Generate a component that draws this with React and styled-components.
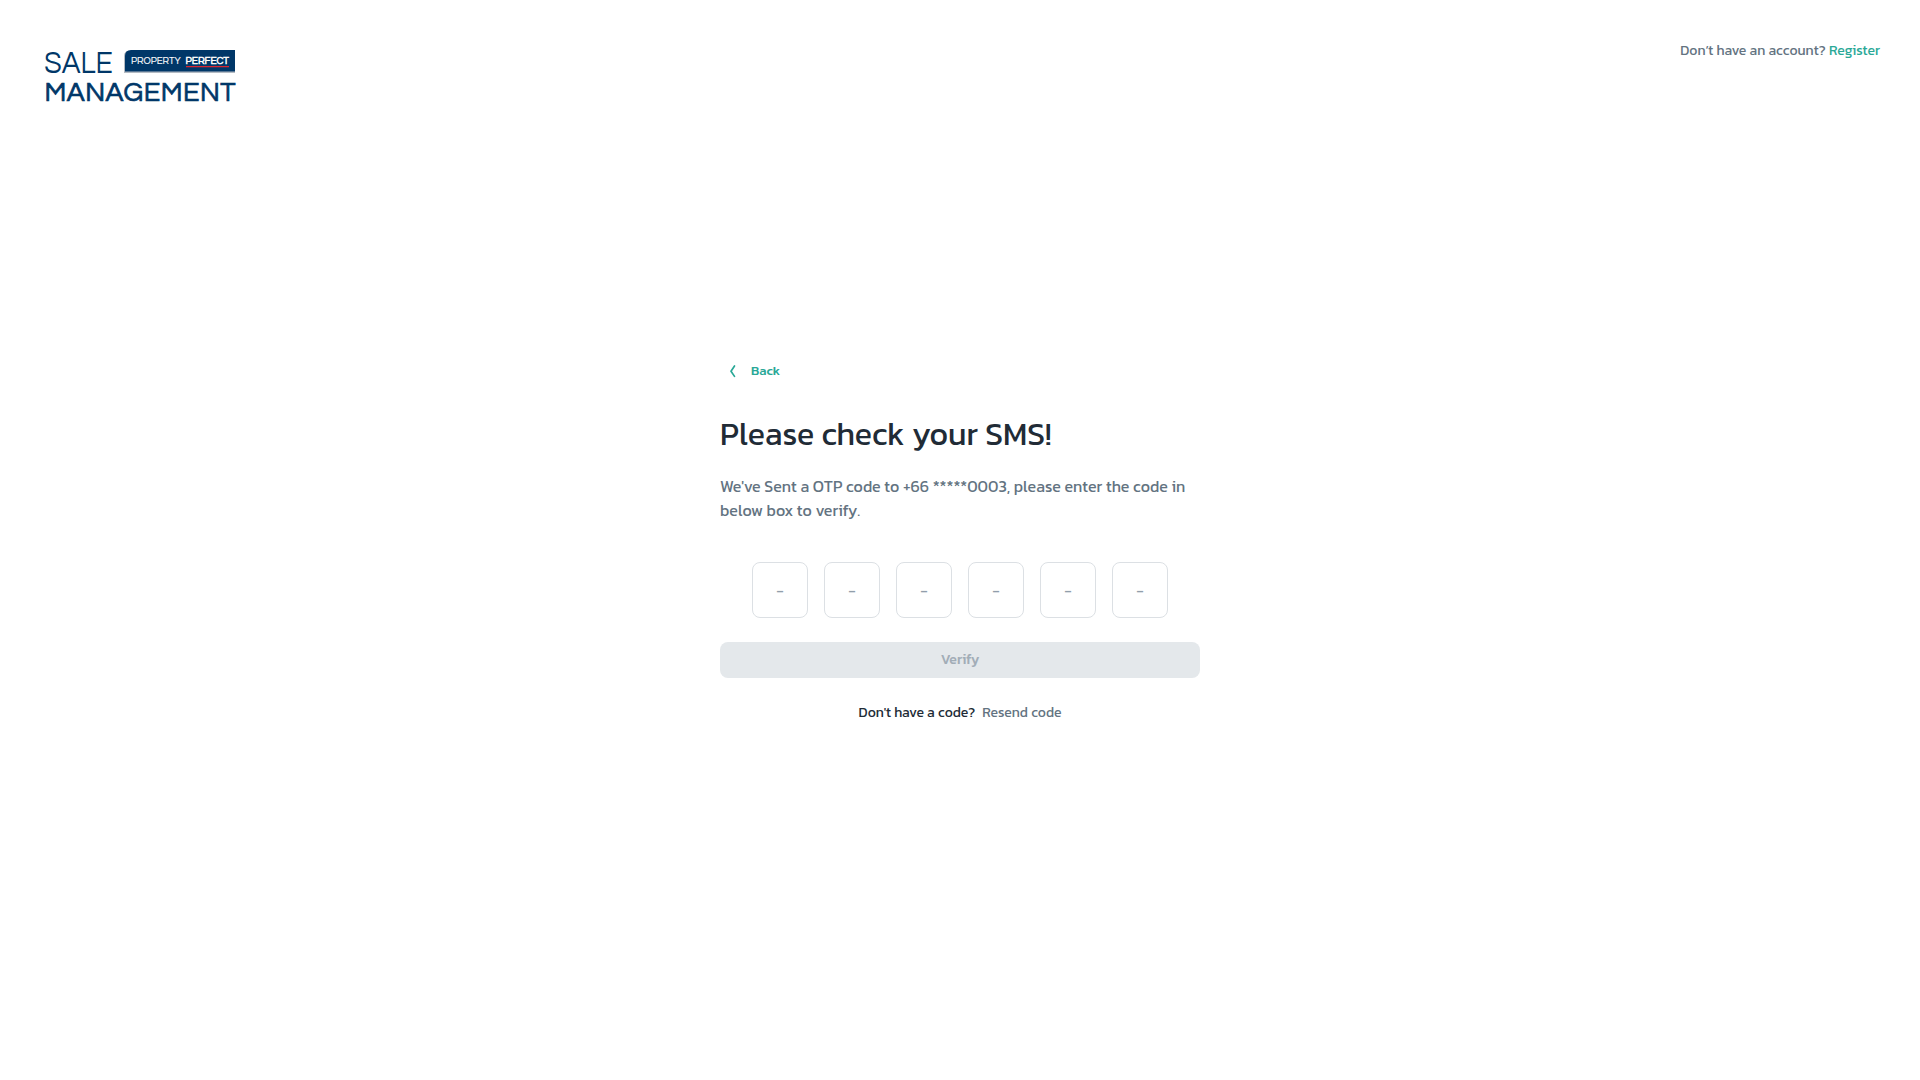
import React from 'react';
import styled, { createGlobalStyle } from 'styled-components';

const GlobalStyle = createGlobalStyle`
  *, *::before, *::after { box-sizing: border-box; }
  body { margin: 0; background: #fff; font-family: Kanit, Roboto, sans-serif; color: #212b36; }
  h1, p { margin: 0; }
`;

const Page = styled.div`
  display: flex;
  flex-direction: column;
  height: 100vh;
  overflow: hidden;
`;

const Header = styled.header`
  display: flex;
  justify-content: space-between;
  align-items: flex-start;
  height: 120px;
  padding: 40px 40px 0;
`;

const Logo = styled.svg`
  display: block;
  width: 200px;
  height: 72px;
  font-family: Questrial, Lato, sans-serif;
`;

const AccountPrompt = styled.p`
  font-size: 14px;
  line-height: 22px;
  color: #637381;
`;

const Link = styled.a`
  color: #2aa897;
  text-decoration: none;
`;

const Main = styled.main`
  display: flex;
  flex-direction: column;
  width: 480px;
  margin: 235px auto 0;
`;

const BackButton = styled.button`
  display: flex;
  align-items: center;
  align-self: flex-start;
  gap: 8px;
  height: 30px;
  padding: 1px 5px 0 3px;
  border: 0;
  background: none;
  color: #2aa897;
  font: 500 13px/22px Kanit, Roboto, sans-serif;
`;

const Title = styled.h1`
  margin-top: 25px;
  font-weight: 400;
  font-size: 32px;
  line-height: 48px;
  white-space: nowrap;
`;

const Description = styled.p`
  margin-top: 16px;
  font-size: 16px;
  line-height: 24px;
  color: #637381;
  white-space: nowrap;
`;

const CodeRow = styled.div`
  display: flex;
  justify-content: center;
  gap: 16px;
  margin-top: 40px;
`;

const CodeInput = styled.input`
  width: 56px;
  height: 56px;
  padding: 0 0 1px;
  border: 1px solid #dce0e4;
  border-radius: 8px;
  background: #fff;
  text-align: center;
  font: 400 16px/23px Kanit, Roboto, sans-serif;
  outline: 0;
  &::placeholder { color: #919eab; opacity: 1; }
`;

const VerifyButton = styled.button`
  height: 36px;
  margin-top: 24px;
  padding: 0;
  border: 0;
  border-radius: 8px;
  background: #e4e8eb;
  color: #a2adb7;
  font: 500 14px/24px Kanit, Roboto, sans-serif;
`;

const Resend = styled.p`
  display: flex;
  justify-content: center;
  gap: 7px;
  margin-top: 24px;
  font-size: 14px;
  line-height: 22px;
`;

const ResendLink = styled.span`
  color: #637381;
`;

const slots = [1, 2, 3, 4, 5, 6];

function BrandLogo() {
  return (
    <Logo viewBox="40 40 200 72" role="img" aria-label="Sale Management Property Perfect">
      <text x="44.300" y="72.500" fontSize="32" fill="#003768" textLength="68.500" lengthAdjust="spacingAndGlyphs">SALE</text>
      <path d="M124 73V56q0-5 5-5H235V73Z" fill="#b4bbc3" />
      <path d="M125 71.500V56q0-6 6-6H235V71.500Z" fill="#003768" />
      <text x="131" y="64.200" fontSize="10" fill="#fff" stroke="#fff" strokeWidth="0.150" textLength="49.500" lengthAdjust="spacingAndGlyphs">PROPERTY</text>
      <text x="185.500" y="64.200" fontSize="10" fill="#fff" stroke="#fff" strokeWidth="0.500" textLength="43.500" lengthAdjust="spacing">PERFECT</text>
      <path d="M186 66.700H229" stroke="#d9252f" strokeWidth="1.300" />
      <text x="44.500" y="101.300" fontSize="27" fill="#003768" stroke="#003768" strokeWidth="0.700" textLength="191" lengthAdjust="spacing">MANAGEMENT</text>
    </Logo>
  );
}

export default function App() {
  return (
    <Page>
      <GlobalStyle />
      <Header>
        <BrandLogo />
        <AccountPrompt>
          Don’t have an account? <Link href="#">Register</Link>
        </AccountPrompt>
      </Header>
      <Main>
        <BackButton type="button">
          <svg width="20" height="20" viewBox="0 0 20 20" fill="none" stroke="currentColor" strokeWidth="1.700" strokeLinecap="round" strokeLinejoin="round">
            <path d="M11.500 5L8 10.200L11.500 15.400" />
          </svg>
          Back
        </BackButton>
        <Title>Please check your SMS!</Title>
        <Description>
          We've Sent a OTP code to +66 *****0003, please enter the code in
          <br />
          below box to verify.
        </Description>
        <CodeRow>
          {slots.map((n) => (
            <CodeInput key={n} placeholder="-" maxLength={1} aria-label={`Digit ${n}`} />
          ))}
        </CodeRow>
        <VerifyButton type="button" disabled>Verify</VerifyButton>
        <Resend>
          <span>Don't have a code?</span>
          <ResendLink>Resend code</ResendLink>
        </Resend>
      </Main>
    </Page>
  );
}
